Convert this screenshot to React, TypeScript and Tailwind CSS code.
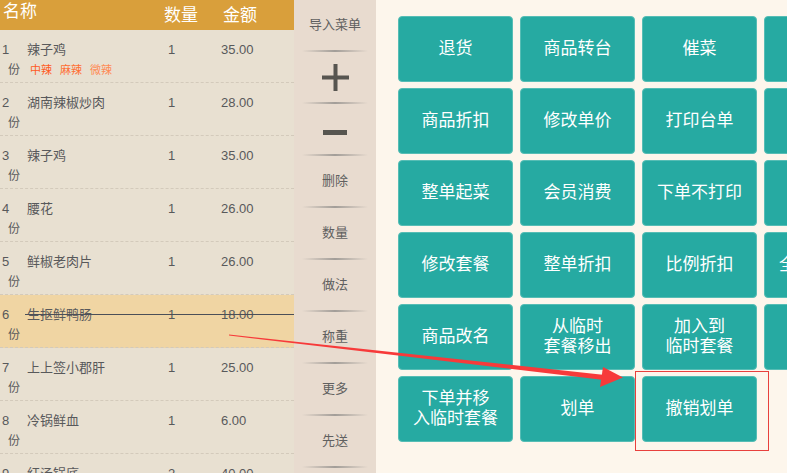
import React from 'react'

interface OrderItem {
  no: number
  name: string
  qty: number
  amount: string
  tags?: string[]
  struck?: boolean
}

const items: OrderItem[] = [
  { no: 1, name: '辣子鸡', qty: 1, amount: '35.00', tags: ['中辣', '麻辣', '微辣'] },
  { no: 2, name: '湖南辣椒炒肉', qty: 1, amount: '28.00' },
  { no: 3, name: '辣子鸡', qty: 1, amount: '35.00' },
  { no: 4, name: '腰花', qty: 1, amount: '26.00' },
  { no: 5, name: '鲜椒老肉片', qty: 1, amount: '26.00' },
  { no: 6, name: '生抠鲜鸭肠', qty: 1, amount: '18.00', struck: true },
  { no: 7, name: '上上签小郡肝', qty: 1, amount: '25.00' },
  { no: 8, name: '冷锅鲜血', qty: 1, amount: '6.00' },
  { no: 9, name: '红汤锅底', qty: 2, amount: '40.00' },
]

const tagColors = ['text-[#ff5b1f]', 'text-[#ff6e33]', 'text-[#ff8a55]']

const sideTools = ['导入菜单', 'plus', 'minus', '删除', '数量', '做法', '称重', '更多', '先送']

const actions: string[][] = [
  ['退货', '商品转台', '催菜', '整单备注'],
  ['商品折扣', '修改单价', '打印台单', '赠送'],
  ['整单起菜', '会员消费', '下单不打印', '叫起'],
  ['修改套餐', '整单折扣', '比例折扣', '全单折扣价'],
  ['商品改名', '从临时\n套餐移出', '加入到\n临时套餐', '退单'],
  ['下单并移\n入临时套餐', '划单', '撤销划单'],
]

function OrderRow({ item }: { item: OrderItem }) {
  return (
    <div
      className={`relative h-[53px] border-b border-dashed border-[#d3cabb] pt-[12px] ${
        item.struck ? 'bg-[#f0d5a3]' : ''
      }`}
    >
      <div className="flex h-[16px] items-center text-[13px] leading-[16px] text-[#58595b]">
        <span className="w-[27px] pl-[2px]">{item.no}</span>
        <span className="w-[139px]">{item.name}</span>
        <span className="w-[55px] pl-[2px]">{item.qty}</span>
        <span>{item.amount}</span>
      </div>
      <div className="mt-[4px] flex h-[16px] items-center text-[12px] leading-[16px]">
        <span className="w-[30px] pl-[8px] text-[#58595b]">份</span>
        {item.tags?.map((t, i) => (
          <span key={t} className={`mr-[8px] text-[11px] ${tagColors[i]}`}>
            {t}
          </span>
        ))}
      </div>
      {item.struck && (
        <div className="absolute left-[25px] right-0 top-[19px] h-px bg-[#4b4f58]" />
      )}
    </div>
  )
}

function SideTool({ label }: { label: string }) {
  return (
    <div className="flex h-[52px] flex-col">
      <div className="flex h-[50px] items-center justify-center text-[13px] text-[#606060]">
        {label === 'plus' ? (
          <svg width="27" height="27" viewBox="0 0 27 27">
            <rect x="0" y="11.5" width="27" height="4" fill="#575550" />
            <rect x="11.5" y="0" width="4" height="27" fill="#575550" />
          </svg>
        ) : label === 'minus' ? (
          <svg width="24" height="5" viewBox="0 0 24 5" className="mt-[6px]">
            <rect x="0" y="0" width="24" height="5" fill="#575550" />
          </svg>
        ) : (
          label
        )}
      </div>
      <div className="mx-[8px] h-[2px] bg-gradient-to-r from-transparent via-[#a29d98] to-transparent" />
    </div>
  )
}

export default function App() {
  return (
    <div
      className="relative flex h-[473px] w-[787px] overflow-hidden"
      style={{ fontFamily: '"Liberation Sans", "Noto Sans CJK SC", sans-serif' }}
    >
      {/* Order list */}
      <div className="w-[294px] shrink-0 bg-[#e8e0d1]">
        <div className="flex h-[30px] bg-[#d99f3b] text-[17px] leading-[20px] text-white">
          <span className="w-[164px] pl-[3px] pt-[2px]">名称</span>
          <span className="w-[59px] pt-[6px]">数量</span>
          <span className="pt-[6px]">金额</span>
        </div>
        {items.map((item) => (
          <OrderRow key={item.no} item={item} />
        ))}
      </div>

      {/* Side tools */}
      <div className="w-[82px] shrink-0 bg-[#e8dbcf]">
        {sideTools.map((t) => (
          <SideTool key={t} label={t} />
        ))}
      </div>

      {/* Action buttons */}
      <div className="flex-1 overflow-hidden bg-[#fdf6ec] pl-[22px] pt-[16px]">
        <div className="grid w-[481px] grid-cols-[115px_115px_115px_115px] gap-x-[7px] gap-y-[6px]">
          {actions.flat().map((a, i) => (
            <button
              key={i}
              className="flex h-[66px] items-center justify-center whitespace-pre-line rounded-[4px] border border-[#56bdb5] bg-[#26aaa2] text-center text-[17px] leading-[20px] text-white"
            >
              {a}
            </button>
          ))}
        </div>
      </div>

      {/* Annotation: highlight box */}
      <div className="absolute left-[635px] top-[371px] h-[80px] w-[134px] border border-[#e8403d]" />

      {/* Annotation: arrow */}
      <svg
        className="pointer-events-none absolute left-0 top-0"
        width="787"
        height="473"
        viewBox="0 0 787 473"
      >
        <polygon points="229,334.5 229,335.5 604,380 605,375" fill="#f73a3a" />
        <polygon points="603,367 623,377.5 600,387" fill="#f73a3a" />
      </svg>
    </div>
  )
}
